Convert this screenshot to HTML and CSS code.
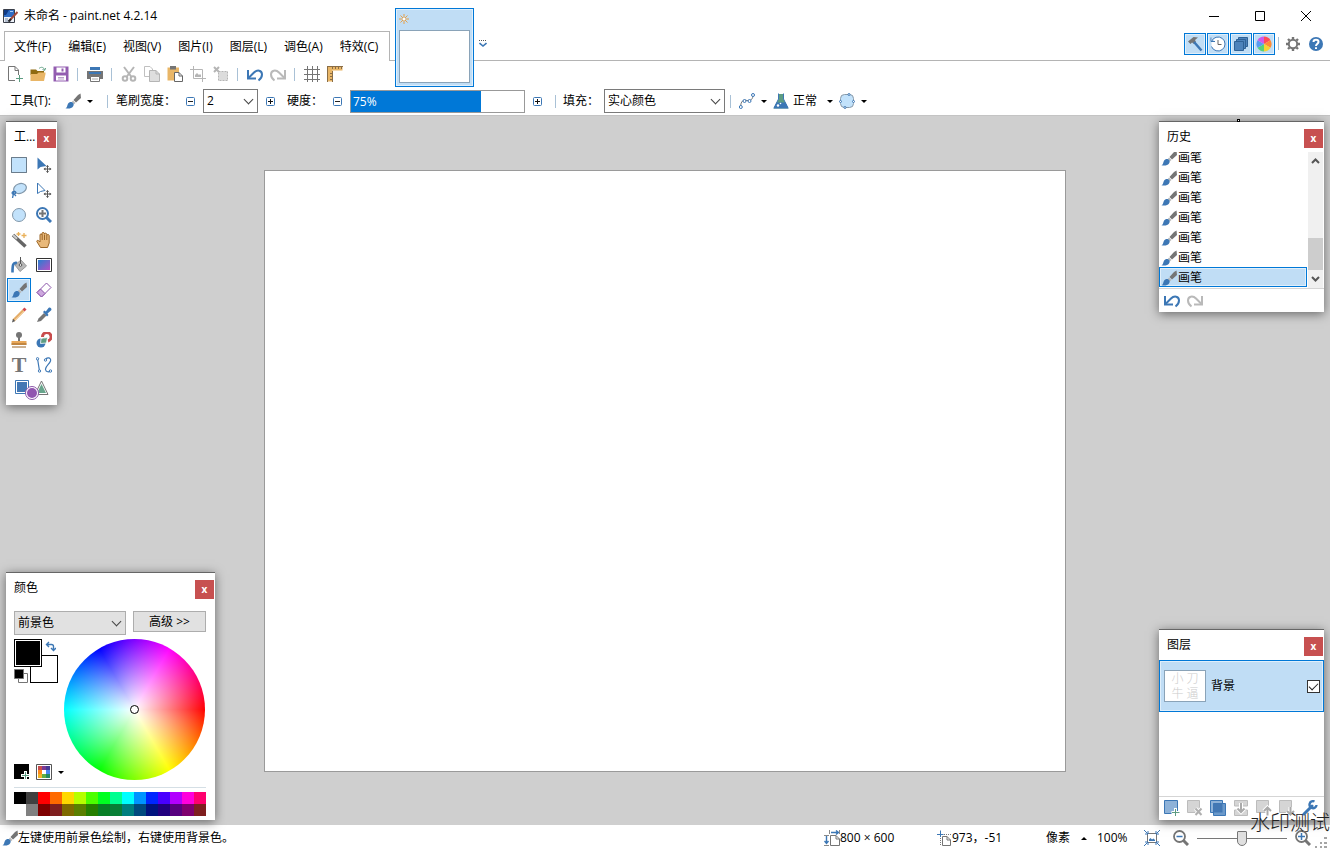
FILE: index.html
```html
<!DOCTYPE html>
<html lang="zh-CN">
<head>
    <meta charset="UTF-8">
    <meta name="viewport" content="width=device-width, initial-scale=1.0">
    <title>未命名 - paint.net 4.2.14</title>
    <link rel="stylesheet" href="styles.css">
</head>
<body>
    <!-- Icon sprite -->
    <svg class="sprite" aria-hidden="true">
        <symbol id="i-brush" viewBox="0 0 16 16">
            <path d="M15.5 0.5L16 5L11 9.5L8.5 7L13 2Z" fill="#757575"/>
            <path d="M8 7.5L10.5 10L9 11.2L6.8 9Z" fill="#b9b9b9"/>
            <path d="M6.5 9C8.500 9.500 9.500 11.500 8 13.500C6.500 15.800 3 15.800 0.500 15.200C2.500 14.500 2 12.500 3 10.800C3.800 9.500 5 8.800 6.500 9Z" fill="#3c77b5"/>
        </symbol>
        <symbol id="i-undo" viewBox="0 0 18 16">
            <path d="M2 4V12.500H10" fill="none" stroke="#3c77b5" stroke-width="2"/>
            <path d="M2.500 12L8 6.500C11 3.500 16 4 16 8.500C16 11 14.500 13 12.500 14.500" fill="none" stroke="#3c77b5" stroke-width="2"/>
        </symbol>
        <symbol id="i-redo" viewBox="0 0 18 16">
            <path d="M16 4V12.500H8" fill="none" stroke="#b9b9b9" stroke-width="2"/>
            <path d="M15.500 12L10 6.500C7 3.500 2 4 2 8.500C2 11 3.500 13 5.500 14.500" fill="none" stroke="#b9b9b9" stroke-width="2"/>
        </symbol>
        <symbol id="i-app" viewBox="0 0 16 16">
            <path d="M1.500 1.500H12.500V14.500H1.500Z" fill="#eef3fa" stroke="#3a3f4a"/>
            <path d="M2 2H12V9H2Z" fill="#2f6cc4"/>
            <path d="M2 2H7L4 7H2Z" fill="#0f3a86"/>
            <path d="M8 3.500H11" stroke="#a9cdf5"/>
            <path d="M3 11H6M3 13H9" stroke="#7a8aa5"/>
            <path d="M15.500 4L8 12" stroke="#a34a3c" stroke-width="2"/>
            <path d="M9 11L6.500 13.500" stroke="#222" stroke-width="2"/>
        </symbol>
        <symbol id="i-new" viewBox="0 0 16 16">
            <path d="M8 14.500H1.500V0.500H8L11.500 4V9M8 0.500V4.500H11.500" fill="none" stroke="#757575"/>
            <path d="M12.500 9V16M9 12.500H16" stroke="#5d9c82"/>
        </symbol>
        <symbol id="i-open" viewBox="0 0 16 16">
            <path d="M0.500 3.500H6L7.500 5H14V9H0.500Z" fill="#8f6a12"/>
            <path d="M0.500 15V8H7L8.500 6.500H15.500V8L14 15Z" fill="#e9b667"/>
            <path d="M9 2.500C11 0.500 14 1 14.500 4M12.500 3.500L14.700 4.500L15.700 2" fill="none" stroke="#6aa58b"/>
        </symbol>
        <symbol id="i-save" viewBox="0 0 16 16">
            <path d="M0.500 0.500H15.500V15.500H0.500Z" fill="#935db0"/>
            <path d="M3.500 1.500H12.500V6.500H3.500ZM3 9.500H13V14.500H3Z" fill="#fff"/>
            <path d="M8.500 2.500H10.500V5.500H8.500Z" fill="#935db0"/>
            <path d="M5 11.500H11M5 13H11" stroke="#b9a0c9"/>
        </symbol>
        <symbol id="i-print" viewBox="0 0 16 16">
            <path d="M3 1H13V4H3Z" fill="#3c77b5"/>
            <path d="M0 5H16V13H0Z" fill="#757575"/>
            <path d="M2 6H14V8H2Z" fill="#3c77b5"/>
            <path d="M3.500 10.500H12.500V15.500H3.500Z" fill="#fff" stroke="#757575"/>
            <path d="M5 13H11" stroke="#aaa"/>
        </symbol>
        <symbol id="i-cut" viewBox="0 0 16 16">
            <g fill="none" stroke="#b5b5b5" stroke-width="2">
                <path d="M3 1L10.500 11M13 1L5.500 11"/>
                <circle cx="4" cy="12.500" r="2.300"/>
                <circle cx="12" cy="12.500" r="2.300"/>
            </g>
        </symbol>
        <symbol id="i-copy" viewBox="0 0 16 16">
            <path d="M0.500 0.500H6L8.500 3V10.500H0.500Z" fill="#fff" stroke="#c0c0c0"/>
            <path d="M5.500 4.500H12L15.500 8V15.500H5.500Z" fill="#dedede" stroke="#b5b5b5"/>
            <path d="M12 4.500V8H15.500" fill="none" stroke="#b5b5b5"/>
        </symbol>
        <symbol id="i-paste" viewBox="0 0 16 16">
            <path d="M0.500 1.500H12V14.500H0.500Z" fill="#e9b667"/>
            <path d="M3 0H9V3.500H3Z" fill="#757575"/>
            <path d="M7.500 6.500H12L15.500 10V15.500H7.500Z" fill="#fff" stroke="#666"/>
            <path d="M12 6.500V10H15.500" fill="none" stroke="#666"/>
        </symbol>
        <symbol id="i-crop" viewBox="0 0 16 16">
            <path d="M3.500 0V12.500H16M0 3.500H12.500V16" fill="none" stroke="#b5b5b5"/>
            <path d="M5 11V9L7 7L9 9L10 8L11 9V11Z" fill="#b5b5b5"/>
        </symbol>
        <symbol id="i-deselect" viewBox="0 0 16 16">
            <path d="M5.500 5.500H14.500V14.500H5.500Z" fill="#dcdcdc" stroke="#b5b5b5" stroke-dasharray="2 1"/>
            <path d="M1 1L6 6M6 1L1 6" stroke="#b5b5b5" stroke-width="2"/>
        </symbol>
        <symbol id="i-grid" viewBox="0 0 16 16">
            <path d="M3.500 0V16M8.500 0V16M13.500 0V16M0 3.500H16M0 8.500H16M0 13.500H16" stroke="#757575"/>
        </symbol>
        <symbol id="i-ruler" viewBox="0 0 16 16">
            <path d="M0.500 0.500H15.500V4.500H5.500V15.500H0.500Z" fill="#e9b667"/>
            <path d="M5.500 16V5M0 0.500H16M5.500 1V3M8.500 1V3M11.500 1V3M14.500 1V3M0.500 0V16M3 7.500H5M3 10.500H5M3 13.500H5" fill="none" stroke="#8a6d45"/>
        </symbol>
        <symbol id="i-minus" viewBox="0 0 11 11">
            <rect x="1.500" y="1.500" width="8" height="8" rx="1" fill="#fff" stroke="#3c77b5"/>
            <path d="M3 5.500H8" stroke="#222"/>
        </symbol>
        <symbol id="i-plus" viewBox="0 0 11 11">
            <rect x="1.500" y="1.500" width="8" height="8" rx="1" fill="#fff" stroke="#3c77b5"/>
            <path d="M3 5.500H8M5.500 3V8" stroke="#111"/>
        </symbol>
        <symbol id="i-curve" viewBox="0 0 16 16">
            <path d="M1.500 14C2 8 4 6.500 8 7.500C11.500 8.500 14 6 14 2" fill="none" stroke="#757575"/>
            <g fill="#fff" stroke="#3c77b5">
                <circle cx="1.800" cy="14" r="1.500"/><circle cx="5.500" cy="8" r="1.500"/>
                <circle cx="10.500" cy="8" r="1.500"/><circle cx="14" cy="2" r="1.500"/>
            </g>
        </symbol>
        <symbol id="i-flask" viewBox="0 0 16 16">
            <path d="M5.500 1H10.500V6L15.500 15.500H0.500L5.500 6Z" fill="#5d9c82"/>
            <path d="M3.500 9.500H12.500L15.500 15.500H0.500Z" fill="#3c77b5"/>
            <path d="M5.500 0.500V6L1 15M10.500 0.500V6L15 15" fill="none" stroke="#3c77b5"/>
            <circle cx="5" cy="12.500" r="1.200" fill="#fff"/><circle cx="7.500" cy="10.500" r="0.800" fill="#fff"/>
        </symbol>
        <symbol id="i-shape" viewBox="0 0 16 16">
            <rect x="1.500" y="1.500" width="13" height="13" rx="4" fill="#c2e2fb" stroke="#8a9aa8"/>
            <g fill="#fff" stroke="#3c77b5"><circle cx="10" cy="1.500" r="1"/><circle cx="1.500" cy="8.500" r="1"/><circle cx="14.500" cy="8.500" r="1"/><circle cx="6" cy="14.500" r="1"/></g>
        </symbol>
        <symbol id="i-hammer" viewBox="0 0 16 16">
            <path d="M1 5.500L6.500 1L11 1.500L8 4L9 6L7 8L5 6.500L3.500 8Z" fill="#757575"/>
            <path d="M7 6L14.500 14.500" stroke="#3c77b5" stroke-width="2.500"/>
        </symbol>
        <symbol id="i-clock" viewBox="0 0 16 16">
            <path d="M1.500 5.500A7 7 0 1 1 1.500 10.500M1 1.500V5.500H5" fill="#fff" stroke="#3c77b5"/>
            <path d="M8 4V8.500H11.500" fill="none" stroke="#666"/>
        </symbol>
        <symbol id="i-stack" viewBox="0 0 16 16">
            <g fill="#4d83bb" stroke="#2f6296"><path d="M5.500 1.500H14.500V10.500H5.500Z"/><path d="M3.500 3.500H12.500V12.500H3.500Z"/><path d="M1.500 5.500H10.500V14.500H1.500Z"/></g>
        </symbol>
        <symbol id="i-wheel" viewBox="0 0 16 16">
            <path d="M8 8V0.500A7.500 7.500 0 0 1 14.500 4.200Z" fill="#ff4c55"/>
            <path d="M8 8L14.500 4.200A7.500 7.500 0 0 1 14.500 11.800Z" fill="#ff8b35"/>
            <path d="M8 8L14.500 11.800A7.500 7.500 0 0 1 8 15.500Z" fill="#f6d433"/>
            <path d="M8 8V15.500A7.500 7.500 0 0 1 1.500 11.800Z" fill="#56d17a"/>
            <path d="M8 8L1.500 11.800A7.500 7.500 0 0 1 1.500 4.200Z" fill="#5a9cf2"/>
            <path d="M8 8L1.500 4.200A7.500 7.500 0 0 1 8 0.500Z" fill="#cf5bea"/>
        </symbol>
        <symbol id="i-gear" viewBox="0 0 16 16">
            <circle cx="8" cy="8" r="4.200" fill="none" stroke="#757575" stroke-width="2"/>
            <path d="M8 1V3M8 13V15M1 8H3M13 8H15M3 3L4.500 4.500M11.500 11.500L13 13M3 13L4.500 11.500M11.500 4.500L13 3" stroke="#757575" stroke-width="2.400"/>
        </symbol>
        <symbol id="i-help" viewBox="0 0 16 16">
            <circle cx="8" cy="8" r="7" fill="#3c77b5"/>
            <path d="M5.500 6C5.500 3 10.500 3 10.500 6C10.500 7.500 8 8 8 10M8 11.200V13" fill="none" stroke="#fff" stroke-width="2"/>
        </symbol>
        <symbol id="t-rect" viewBox="0 0 16 16"><path d="M0.500 0.500H15.500V15.500H0.500Z" fill="#c2e2fb" stroke="#8fb4d4"/><path d="M0.500 0.500H15.500V15.500H0.500Z" fill="none" stroke="#444" stroke-dasharray="1 1"/></symbol>
        <symbol id="t-move" viewBox="0 0 16 16"><path d="M1.500 0.500V12.500L4.500 10L10.500 9Z" fill="#3c77b5"/><path d="M11.500 8.500V15.500M8 12H15" stroke="#555"/><path d="M10 10L11.500 8L13 10ZM10 14L11.500 16L13 14ZM9.500 10.500L7.500 12L9.500 13.500ZM13.500 10.500L15.500 12L13.500 13.500Z" fill="#555"/></symbol>
        <symbol id="t-movesel" viewBox="0 0 16 16"><path d="M1.500 1V11.500L4.500 9.500L9 8.500Z" fill="#fff" stroke="#3c77b5"/><path d="M11.500 8.500V15.500M8 12H15" stroke="#555"/><path d="M10 10L11.500 8L13 10ZM10 14L11.500 16L13 14ZM9.500 10.500L7.500 12L9.500 13.500ZM13.500 10.500L15.500 12L13.500 13.500Z" fill="#555"/></symbol>
        <symbol id="t-lasso" viewBox="0 0 16 16"><ellipse cx="9" cy="6.500" rx="6.500" ry="4.800" transform="rotate(-20 9 6.500)" fill="#c2e2fb" stroke="#8298ab" stroke-width="1.200"/><path d="M3 9.500C0 10 1 13 3.500 12C5.500 11 5 9 3 9.500L1.500 16M3 12L5 14" fill="none" stroke="#3c77b5" stroke-width="1.300"/></symbol>
        <symbol id="t-ellipse" viewBox="0 0 16 16"><circle cx="8" cy="8" r="6.500" fill="#c2e2fb" stroke="#8298ab"/></symbol>
        <symbol id="t-zoom" viewBox="0 0 16 16"><circle cx="6.500" cy="6.500" r="5.500" fill="#fff" stroke="#3c77b5" stroke-width="2"/><path d="M10.500 10.500L15 15" stroke="#3c77b5" stroke-width="3"/><path d="M6.500 3V10M3 6.500H10" stroke="#757575" stroke-width="2"/></symbol>
        <symbol id="t-wand" viewBox="0 0 16 16"><path d="M2 3L14.500 14.500" stroke="#666" stroke-width="3.500"/><path d="M2 3L6 6.700" stroke="#ccc" stroke-width="2"/><path d="M7.500 0V4M5.500 2H9.500M13 1V6M10.500 3.500H15.500" stroke="#e9b15a" stroke-width="1.300"/></symbol>
        <symbol id="t-hand" viewBox="0 0 16 16"><path d="M4.500 15.500L0.800 9.500C0.500 8 2.500 8 4 10V3C4 1.500 6 1.500 6 3V1.500C6 0 8.300 0 8.300 1.500V2C8.300 0.800 10.800 0.800 10.800 2.500V3.500C11 2 13.200 2 13.200 4V11L11.500 15.500Z" fill="#e9b97a" stroke="#9a6526"/><path d="M6.200 3V8M8.500 2.500V8M10.800 3.500V8" stroke="#9a6526"/></symbol>
        <symbol id="t-bucket" viewBox="0 0 16 16"><path d="M4 8L10 3L15.500 9L9 14.500Z" fill="#b8b8b8" stroke="#999"/><path d="M9.500 0V8" stroke="#555"/><circle cx="9.500" cy="8" r="1.300" fill="#fff" stroke="#555"/><path d="M6 6C2 5 1.500 8 1.500 15.500" fill="none" stroke="#3c77b5" stroke-width="2.600"/></symbol>
        <linearGradient id="grad" x1="0" y1="0" x2="1" y2="1"><stop offset="0" stop-color="#277fd1"/><stop offset="1" stop-color="#b74fc6"/></linearGradient>
        <symbol id="t-gradient" viewBox="0 0 16 16"><path d="M0.500 1.500H15.500V14.500H0.500Z" fill="#fff" stroke="#333"/><path d="M2 3H14V13H2Z" fill="url(#grad)"/></symbol>
        <symbol id="t-eraser" viewBox="0 0 16 16"><path d="M10.500 1L15 5.500L5.500 15L1 10.500Z" fill="#fff" stroke="#8c55aa"/><path d="M4.500 7L9 11.500L5.500 15L1 10.500Z" fill="#cda8de" stroke="#8c55aa"/></symbol>
        <symbol id="t-pencil" viewBox="0 0 16 16"><path d="M2.500 13.500L12.500 3.500" stroke="#e5ad68" stroke-width="3"/><path d="M3 14L13 4" stroke="#f3cc98" stroke-width="1"/><path d="M12.500 3.500L14.500 1.500" stroke="#d3474b" stroke-width="3"/><path d="M1 15.500L2 11.800L4.200 14Z" fill="#555"/></symbol>
        <symbol id="t-picker" viewBox="0 0 16 16"><path d="M1 15L2.500 11.500L8 6L10.500 8.500L5 14Z" fill="#757575"/><path d="M7 5L8.500 3.500L9.800 4.500L12.500 1C14 -0.500 16.500 2 15 3.500L11.500 6.500L12.500 8L11 9.500Z" fill="#3c77b5"/></symbol>
        <symbol id="t-stamp" viewBox="0 0 16 16"><circle cx="8" cy="3" r="3" fill="#757575"/><path d="M7 5H9V9H7Z" fill="#757575"/><path d="M0.500 9H15.500V13H0.500Z" fill="#e9a85a"/><path d="M0.500 12H15.500M1 15H15" stroke="#9a6526"/></symbol>
        <symbol id="t-recolor" viewBox="0 0 16 16"><path d="M6.500 5A4.300 4.300 0 1 1 12 9" fill="none" stroke="#c84c4c" stroke-width="3"/><circle cx="5" cy="11" r="4.500" fill="#3c77b5"/><path d="M4.500 11.500L5 6.500L11.500 5L10.500 11Z" fill="#5d9c82" stroke="#fff" stroke-width="0.800"/><path d="M9 6.500L12 3.500" stroke="#fff"/></symbol>
        <symbol id="t-line" viewBox="0 0 16 16"><path d="M1.500 1.500L3.500 14M9.500 3C10 0 15.500 0 14.500 4C13.500 7 9 9.500 9.500 12.500C10 15.500 13 15 15 14" fill="none" stroke="#3c77b5" stroke-width="1.200"/><g fill="#fff" stroke="#3c77b5"><circle cx="1.500" cy="1.800" r="1.200"/><circle cx="3.500" cy="14" r="1.200"/><circle cx="9.500" cy="3" r="1.200"/><circle cx="14.500" cy="14" r="1.200"/></g></symbol>
        <symbol id="t-shapes" viewBox="0 0 36 20"><path d="M1.500 0.500H14.500V13.500H1.500Z" fill="#fff" stroke="#3c77b5"/><path d="M3 2H13V12H3Z" fill="#4378b4"/><path d="M27.500 1L34 14.500H21Z" fill="#fff" stroke="#757575"/><path d="M27.500 4L32 13H23Z" fill="#68a58c"/><circle cx="18" cy="13" r="6.500" fill="#fff" stroke="#8c55aa"/><circle cx="18" cy="13" r="5" fill="#9155b0"/></symbol>
        <symbol id="l-add" viewBox="0 0 16 16"><path d="M0.500 0.500H13.500V13.500H0.500Z" fill="#8eb2d8" stroke="#3c77b5"/><path d="M11.500 8V16M7.500 12.500H16" stroke="#fff" stroke-width="3"/><path d="M11.500 9V16M8 12.500H15.500" stroke="#5d9c82"/></symbol>
        <symbol id="l-del" viewBox="0 0 16 16"><path d="M0.500 0.500H12.500V12.500H0.500Z" fill="#d5d5d5" stroke="#bcbcbc"/><path d="M8.500 8.500L14.500 15M14.500 8.500L8.500 15" stroke="#fff" stroke-width="4"/><path d="M8.500 8.500L14.500 15M14.500 8.500L8.500 15" stroke="#b0b0b0" stroke-width="2"/></symbol>
        <symbol id="l-dup" viewBox="0 0 16 16"><path d="M0.500 0.500H12.500V12.500H0.500Z" fill="#8eb2d8" stroke="#3c77b5"/><path d="M3.500 3.500H15.500V15.500H3.500Z" fill="#6b99ca" stroke="#3c77b5"/><path d="M3.500 3.500H12.500V12.500H3.500Z" fill="#4378b4"/></symbol>
        <symbol id="l-merge" viewBox="0 0 16 16"><path d="M1.500 0.500H14.500V6H1.500ZM1.500 10H14.500V15.500H1.500Z" fill="#d5d5d5" stroke="#bcbcbc"/><path d="M8 3V12M4.500 8.500L8 12L11.500 8.500" fill="none" stroke="#fff" stroke-width="4"/><path d="M8 3V12M4.500 8.500L8 12L11.500 8.500" fill="none" stroke="#aaa" stroke-width="2"/></symbol>
        <symbol id="l-up" viewBox="0 0 16 16"><path d="M0.500 0.500H12.500V12.500H0.500Z" fill="#d5d5d5" stroke="#bcbcbc"/><path d="M11.500 15.500V8M8 11L11.500 7.500L15 11" fill="none" stroke="#fff" stroke-width="4"/><path d="M11.500 15.500V8M8 11L11.500 7.500L15 11" fill="none" stroke="#aaa" stroke-width="2"/></symbol>
        <symbol id="l-down" viewBox="0 0 16 16"><path d="M0.500 0.500H12.500V12.500H0.500Z" fill="#d5d5d5" stroke="#bcbcbc"/><path d="M11.500 7V14.500M8 11L11.500 14.500L15 11" fill="none" stroke="#fff" stroke-width="4"/><path d="M11.500 7V14.500M8 11L11.500 14.500L15 11" fill="none" stroke="#aaa" stroke-width="2"/></symbol>
        <symbol id="l-wrench" viewBox="0 0 16 16"><path d="M2 14L10 6" stroke="#3c77b5" stroke-width="3" stroke-linecap="round"/><path d="M12.500 1.500A3.500 3.500 0 1 0 14.500 5" fill="none" stroke="#3c77b5" stroke-width="2.400"/></symbol>
        <symbol id="s-size" viewBox="0 0 16 16"><path d="M6.500 5.500H12L15.500 9V15.500H6.500ZM12 5.500V9H15.500" fill="#fff" stroke="#757575"/><path d="M2.500 6V13M0.500 11L2.500 13.500L4.500 11M7 2.500H14M12 0.500L14.500 2.500L12 4.500" fill="none" stroke="#3c77b5" stroke-width="1.400"/><path d="M0 5.500H5M0 15.500H5M5.500 0V4M15.500 0V4" stroke="#888"/></symbol>
        <symbol id="s-pos" viewBox="0 0 16 16"><path d="M6.500 6.500H11L14.500 10V15.500H6.500ZM11 6.500V10H14.500" fill="#fff" stroke="#757575"/><path d="M4.500 0.500V7M1 4.500H7.500" stroke="#3c77b5"/><path d="M8 4.500H16M4.500 8V16" stroke="#777" stroke-dasharray="1 1"/></symbol>
        <symbol id="s-fit" viewBox="0 0 16 16"><path d="M3.500 3.500H12.500V12.500H3.500Z" fill="#fff" stroke="#757575"/><path d="M5 11V9.500L6.500 8L8 9.500L9.500 8.500L11 10V11Z" fill="#3c77b5"/><path d="M0 0L4 4M4 1V4H1M16 0L12 4M12 1V4H15M0 16L4 12M1 12H4V15M16 16L12 12M15 12H12V15" fill="none" stroke="#3c77b5"/></symbol>
        <symbol id="s-zoomout" viewBox="0 0 16 16"><circle cx="6.500" cy="6.500" r="5.500" fill="#fff" stroke="#757575" stroke-width="1.800"/><path d="M10.500 10.500L15 15" stroke="#757575" stroke-width="3"/><path d="M3.500 6.500H9.500" stroke="#3c77b5" stroke-width="1.500"/></symbol>
        <symbol id="s-zoomin" viewBox="0 0 16 16"><circle cx="6.500" cy="6.500" r="5.500" fill="#fff" stroke="#757575" stroke-width="1.800"/><path d="M10.500 10.500L15 15" stroke="#757575" stroke-width="3"/><path d="M3 6.500H10M6.500 3V10" stroke="#3c77b5" stroke-width="1.500"/></symbol>
    </svg>

    <header class="app-header">
        <div class="titlebar">
            <svg class="icon"><use href="#i-app"/></svg>
            <h1 class="title">未命名 - paint.net 4.2.14</h1>
            <div class="window-buttons">
                <button aria-label="最小化"><svg viewBox="0 0 10 10"><path d="M0 5.500H10"/></svg></button>
                <button aria-label="最大化"><svg viewBox="0 0 10 10"><path d="M0.500 0.500H9.500V9.500H0.500Z"/></svg></button>
                <button aria-label="关闭"><svg viewBox="0 0 10 10"><path d="M0 0L10 10M10 0L0 10"/></svg></button>
            </div>
        </div>

        <div class="menu-row">
            <nav class="menu">
                <button>文件(F)</button>
                <button>编辑(E)</button>
                <button>视图(V)</button>
                <button>图片(I)</button>
                <button>图层(L)</button>
                <button>调色(A)</button>
                <button>特效(C)</button>
            </nav>
            <div class="menu-rest">
                <button class="tab-list" aria-label="图像列表">
                    <svg viewBox="0 0 8 8"><path d="M0 0.500H8" stroke="#555" stroke-dasharray="1 1"/><path d="M0.500 3L4 6L7.500 3" fill="none" stroke="#3c77b5" stroke-width="1.600"/></svg>
                </button>
                <div class="toggles">
                    <button class="toggle" aria-label="工具"><svg class="icon"><use href="#i-hammer"/></svg></button>
                    <button class="toggle" aria-label="历史"><svg class="icon"><use href="#i-clock"/></svg></button>
                    <button class="toggle" aria-label="图层"><svg class="icon"><use href="#i-stack"/></svg></button>
                    <button class="toggle" aria-label="颜色"><svg class="icon"><use href="#i-wheel"/></svg></button>
                    <span class="sep"></span>
                    <button class="tool-btn" aria-label="设置"><svg class="icon"><use href="#i-gear"/></svg></button>
                    <button class="tool-btn" aria-label="帮助"><svg class="icon"><use href="#i-help"/></svg></button>
                </div>
            </div>
        </div>

        <!-- Thumbnail of the open image, hangs over the menu and the toolbar -->
        <button class="image-tab" aria-label="未命名">
            <svg viewBox="0 0 10 10"><path d="M5 0V10M0 5H10M1.500 1.500L8.500 8.500M8.500 1.500L1.500 8.500" stroke="#e6a14a"/><circle cx="5" cy="5" r="1.300" fill="#fff"/></svg>
            <span class="image-tab-thumb"></span>
        </button>

        <div class="toolbar">
            <button class="tool-btn" aria-label="新建"><svg class="icon"><use href="#i-new"/></svg></button>
            <button class="tool-btn" aria-label="打开"><svg class="icon"><use href="#i-open"/></svg></button>
            <button class="tool-btn" aria-label="保存"><svg class="icon"><use href="#i-save"/></svg></button>
            <span class="sep"></span>
            <button class="tool-btn" aria-label="打印"><svg class="icon"><use href="#i-print"/></svg></button>
            <span class="sep"></span>
            <button class="tool-btn" aria-label="剪切"><svg class="icon"><use href="#i-cut"/></svg></button>
            <button class="tool-btn" aria-label="复制"><svg class="icon"><use href="#i-copy"/></svg></button>
            <button class="tool-btn" aria-label="粘贴"><svg class="icon"><use href="#i-paste"/></svg></button>
            <button class="tool-btn" aria-label="裁剪"><svg class="icon"><use href="#i-crop"/></svg></button>
            <button class="tool-btn" aria-label="取消选择"><svg class="icon"><use href="#i-deselect"/></svg></button>
            <span class="sep"></span>
            <button class="tool-btn" aria-label="撤消"><svg class="icon icon-wide"><use href="#i-undo"/></svg></button>
            <button class="tool-btn" aria-label="重做"><svg class="icon icon-wide"><use href="#i-redo"/></svg></button>
            <span class="sep"></span>
            <button class="tool-btn" aria-label="网格"><svg class="icon"><use href="#i-grid"/></svg></button>
            <button class="tool-btn" aria-label="标尺"><svg class="icon"><use href="#i-ruler"/></svg></button>
        </div>

        <div class="toolbar options">
            <span class="options-label tool-label">工具(T):</span>
            <button class="drop-btn" aria-label="画笔"><svg class="icon"><use href="#i-brush"/></svg><i class="caret"></i></button>
            <span class="sep sep-wide"></span>
            <label class="options-label width-label" for="brushWidth">笔刷宽度：</label>
            <button class="step" aria-label="减小宽度"><svg><use href="#i-minus"/></svg></button>
            <span class="select brush-width"><select id="brushWidth"><option>2</option></select></span>
            <button class="step" aria-label="增大宽度"><svg><use href="#i-plus"/></svg></button>
            <label class="options-label hardness-label" for="hardness">硬度：</label>
            <button class="step" aria-label="减小硬度"><svg><use href="#i-minus"/></svg></button>
            <span class="hardness">
                <input type="range" id="hardness" min="0" max="100" value="75" style="--value: 75%">
                <output for="hardness">75%</output>
            </span>
            <button class="step" aria-label="增大硬度"><svg><use href="#i-plus"/></svg></button>
            <span class="sep"></span>
            <label class="options-label fill-label" for="fill">填充：</label>
            <span class="select fill"><select id="fill"><option>实心颜色</option></select></span>
            <span class="sep sep-last"></span>
            <button class="drop-btn" aria-label="曲线"><svg class="icon"><use href="#i-curve"/></svg><i class="caret"></i></button>
            <button class="drop-btn blend"><svg class="icon"><use href="#i-flask"/></svg><span>正常</span><i class="caret"></i></button>
            <button class="drop-btn" aria-label="选区模式"><svg class="icon"><use href="#i-shape"/></svg><i class="caret"></i></button>
        </div>
    </header>

    <main class="workspace">
        <div class="canvas"></div>

        <section class="panel tools-panel">
            <div class="panel-head"><h2>工具</h2><button class="close" aria-label="关闭">x</button></div>
            <div class="tools">
                <button aria-label="矩形选择"><svg class="icon"><use href="#t-rect"/></svg></button>
                <button aria-label="移动所选像素"><svg class="icon"><use href="#t-move"/></svg></button>
                <button aria-label="套索选择"><svg class="icon"><use href="#t-lasso"/></svg></button>
                <button aria-label="移动选区"><svg class="icon"><use href="#t-movesel"/></svg></button>
                <button aria-label="椭圆选择"><svg class="icon"><use href="#t-ellipse"/></svg></button>
                <button aria-label="缩放"><svg class="icon"><use href="#t-zoom"/></svg></button>
                <button aria-label="魔术棒"><svg class="icon"><use href="#t-wand"/></svg></button>
                <button aria-label="平移"><svg class="icon"><use href="#t-hand"/></svg></button>
                <button aria-label="油漆桶"><svg class="icon"><use href="#t-bucket"/></svg></button>
                <button aria-label="渐变"><svg class="icon"><use href="#t-gradient"/></svg></button>
                <button class="active" aria-label="画笔"><svg class="icon"><use href="#i-brush"/></svg></button>
                <button aria-label="橡皮擦"><svg class="icon"><use href="#t-eraser"/></svg></button>
                <button aria-label="铅笔"><svg class="icon"><use href="#t-pencil"/></svg></button>
                <button aria-label="取色器"><svg class="icon"><use href="#t-picker"/></svg></button>
                <button aria-label="克隆图章"><svg class="icon"><use href="#t-stamp"/></svg></button>
                <button aria-label="重新着色"><svg class="icon"><use href="#t-recolor"/></svg></button>
                <button class="text-tool">T</button>
                <button aria-label="线条"><svg class="icon"><use href="#t-line"/></svg></button>
                <button class="shapes" aria-label="形状"><svg><use href="#t-shapes"/></svg></button>
            </div>
        </section>

        <section class="panel history-panel">
            <div class="panel-head"><h2>历史</h2><button class="close" aria-label="关闭">x</button></div>
            <div class="history-body">
                <ul class="history-list">
                    <li><svg class="icon"><use href="#i-brush"/></svg>画笔</li>
                    <li><svg class="icon"><use href="#i-brush"/></svg>画笔</li>
                    <li><svg class="icon"><use href="#i-brush"/></svg>画笔</li>
                    <li><svg class="icon"><use href="#i-brush"/></svg>画笔</li>
                    <li><svg class="icon"><use href="#i-brush"/></svg>画笔</li>
                    <li><svg class="icon"><use href="#i-brush"/></svg>画笔</li>
                    <li class="selected"><svg class="icon"><use href="#i-brush"/></svg>画笔</li>
                </ul>
                <div class="scrollbar">
                    <svg viewBox="0 0 9 6"><path d="M1 5L4.500 1.500L8 5"/></svg>
                    <span class="scroll-thumb"></span>
                    <svg viewBox="0 0 9 6"><path d="M1 1L4.500 4.500L8 1"/></svg>
                </div>
            </div>
            <div class="panel-foot history-foot">
                <button aria-label="撤消"><svg class="icon icon-wide"><use href="#i-undo"/></svg></button>
                <button aria-label="重做"><svg class="icon icon-wide"><use href="#i-redo"/></svg></button>
            </div>
            <span class="pointer"></span>
        </section>

        <section class="panel colors-panel">
            <div class="panel-head"><h2>颜色</h2><button class="close" aria-label="关闭">x</button></div>
            <div class="colors-body">
                <div class="colors-top">
                    <span class="select grey"><select aria-label="颜色目标"><option>前景色</option></select></span>
                    <button class="more">高级 &gt;&gt;</button>
                </div>
                <div class="colors-main">
                    <div class="colors-side">
                        <div class="swatches">
                            <span class="swatch back"></span>
                            <span class="swatch front"></span>
                            <svg class="swap" viewBox="0 0 11 11"><path d="M1.500 3.500H6.500Q8.500 3.500 8.500 5.500V9M4 1L1.500 3.500L4 6M6 7L8.500 9.500L11 7" fill="none" stroke="#3c77b5" stroke-width="1.400"/></svg>
                            <svg class="reset" viewBox="0 0 14 14"><path d="M4.500 4.500H13.500V13.500H4.500Z" fill="#fff" stroke="#757575"/><path d="M0.500 0.500H9.500V9.500H0.500Z" stroke="#757575"/></svg>
                        </div>
                        <div class="palette-tools">
                            <button aria-label="添加颜色"><svg class="icon" viewBox="0 0 16 16"><path d="M0 0H15V15H0Z"/><path d="M11.500 7V16M7 11.500H16" stroke="#fff" stroke-width="3"/><path d="M11.500 8V15M8 11.500H15" stroke="#5d9c82"/></svg></button>
                            <button class="drop-btn" aria-label="调色板"><svg class="icon" viewBox="0 0 16 16"><path d="M0.500 0.500H15.500V15.500H0.500Z" fill="#fff" stroke="#555"/><path d="M2 2H6V6H2Z" fill="#c84c4c"/><path d="M6 2H10V6H6Z" fill="#7a3a95"/><path d="M10 2H14V6H10Z" fill="#443a95"/><path d="M2 6H6V10H2Z" fill="#ff8a1c"/><path d="M10 6H14V10H10Z" fill="#4a86f0"/><path d="M2 10H6V14H2Z" fill="#f0b428"/><path d="M6 10H10V14H6Z" fill="#5fae45"/><path d="M10 10H14V14H10Z" fill="#238a62"/></svg><i class="caret"></i></button>
                        </div>
                    </div>
                    <div class="wheel"><span class="wheel-mark"></span></div>
                </div>
                <div class="palette">
                    <i style="background:#000000"></i><i style="background:#404040"></i><i style="background:#ff0000"></i><i style="background:#ff6a00"></i><i style="background:#ffd800"></i><i style="background:#b6ff00"></i><i style="background:#4cff00"></i><i style="background:#00ff21"></i><i style="background:#00ff90"></i><i style="background:#00ffff"></i><i style="background:#0094ff"></i><i style="background:#0026ff"></i><i style="background:#4800ff"></i><i style="background:#b200ff"></i><i style="background:#ff00dc"></i><i style="background:#ff006e"></i>
                    <i style="background:#ffffff"></i><i style="background:#808080"></i><i style="background:#7f0000"></i><i style="background:#7f1f1f"></i><i style="background:#7f6a00"></i><i style="background:#5b7f00"></i><i style="background:#267f00"></i><i style="background:#087f26"></i><i style="background:#087f36"></i><i style="background:#007f7f"></i><i style="background:#004a7f"></i><i style="background:#00137f"></i><i style="background:#21007f"></i><i style="background:#57007f"></i><i style="background:#7f006e"></i><i style="background:#7f1f1f"></i>
                </div>
            </div>
        </section>

        <section class="panel layers-panel">
            <div class="panel-head"><h2>图层</h2><button class="close" aria-label="关闭">x</button></div>
            <label class="layer">
                <span class="layer-thumb">小 刀<br>牛 逼</span>
                <span class="layer-name">背景</span>
                <input type="checkbox" checked>
            </label>
            <div class="layers-space"></div>
            <div class="panel-foot layers-foot">
                <button aria-label="添加图层"><svg class="icon"><use href="#l-add"/></svg></button>
                <button aria-label="删除图层"><svg class="icon"><use href="#l-del"/></svg></button>
                <button aria-label="复制图层"><svg class="icon"><use href="#l-dup"/></svg></button>
                <button aria-label="向下合并"><svg class="icon"><use href="#l-merge"/></svg></button>
                <button aria-label="上移"><svg class="icon"><use href="#l-up"/></svg></button>
                <button aria-label="下移"><svg class="icon"><use href="#l-down"/></svg></button>
                <button aria-label="属性"><svg class="icon"><use href="#l-wrench"/></svg></button>
            </div>
        </section>
    </main>

    <footer class="statusbar">
        <svg class="icon"><use href="#i-brush"/></svg>
        <span class="hint">左键使用前景色绘制，右键使用背景色。</span>
        <span class="status-item status-size"><svg class="icon"><use href="#s-size"/></svg>800 × 600</span>
        <span class="status-item status-pos"><svg class="icon"><use href="#s-pos"/></svg>973，-51</span>
        <button class="units">像素<i class="caret up"></i></button>
        <span class="zoom-value">100%</span>
        <div class="zoom-tools">
            <button aria-label="适合窗口"><svg class="icon"><use href="#s-fit"/></svg></button>
            <button aria-label="缩小"><svg class="icon"><use href="#s-zoomout"/></svg></button>
            <input type="range" class="zoom-slider" aria-label="缩放" min="0" max="100" value="50">
            <button aria-label="放大"><svg class="icon"><use href="#s-zoomin"/></svg></button>
        </div>
        <svg class="grip" viewBox="0 0 12 12"><path d="M9 0H12V2H9ZM5 5H7V7H5ZM9 5H12V7H9ZM0 9H2V11H0ZM5 9H7V11H5ZM9 9H12V11H9Z" fill="#a5a5a5"/></svg>
    </footer>

    <div class="watermark">水印测试</div>
</body>
</html>
```
FILE: styles.css
```css
/* General styling */
* {
    box-sizing: border-box;
}

body {
    margin: 0;
    height: 100vh;
    display: flex;
    flex-direction: column;
    position: relative;
    overflow: hidden;
    background: #fff;
    color: #000;
    font-family: "Open Sans", "Noto Sans CJK SC", sans-serif;
    font-size: 12px;
    line-height: 16px;
}

button,
select,
input {
    font: inherit;
    color: inherit;
    margin: 0;
}

button {
    display: flex;
    align-items: center;
    justify-content: center;
    padding: 0;
    border: none;
    background: none;
    white-space: nowrap;
}

h1,
h2 {
    margin: 0;
    font-size: 12px;
    font-weight: normal;
}

svg {
    display: block;
    flex: none;
}

.sprite {
    position: absolute;
    width: 0;
    height: 0;
}

.icon {
    width: 16px;
    height: 16px;
}

.icon-wide {
    width: 18px;
}

.caret {
    border: 3px solid transparent;
    border-top-color: #000;
    border-bottom: none;
}

.caret.up {
    border-top: none;
    border-bottom: 3px solid #000;
}

/* Header */
.app-header {
    position: relative;
    border-bottom: 1px solid #c4c4c4;
}

.titlebar {
    display: flex;
    align-items: center;
    height: 31px;
    padding: 0 1px 0 2px;
}

.title {
    flex: 1;
    padding-left: 6px;
}

.window-buttons {
    display: flex;
}

.window-buttons button {
    width: 46px;
    height: 31px;
}

.window-buttons svg {
    width: 10px;
    height: 10px;
    fill: none;
    stroke: #000;
}

.menu-row {
    display: flex;
    height: 30px;
}

.menu-row::before {
    content: "";
    width: 4px;
    border-bottom: 1px solid #b4b4b4;
}

.menu {
    display: flex;
    gap: 1px;
    padding: 0 3px 0 1px;
    border: 1px solid #b4b4b4;
    border-bottom: none;
}

.menu button {
    padding: 0 8px;
}

.menu-rest {
    flex: 1;
    display: flex;
    align-items: center;
    justify-content: space-between;
    padding: 0 3px 4px 89px;
    border-bottom: 1px solid #b4b4b4;
}

.tab-list svg {
    width: 8px;
    height: 8px;
}

.toggles {
    display: flex;
    align-items: center;
}

.toggle {
    width: 22px;
    height: 22px;
    margin-right: 1px;
    border: 1px solid #0078d7;
    background: #c0ddf5;
    box-shadow: inset 0 0 0 1px #e0effb;
}

.image-tab {
    position: absolute;
    left: 395px;
    top: 8px;
    width: 79px;
    height: 79px;
    flex-direction: column;
    align-items: stretch;
    justify-content: space-between;
    padding: 5px 3px 3px;
    border: 1px solid #0078d7;
    background: #c0ddf5;
    box-shadow: inset 0 0 0 1px #e0effb;
}

.image-tab svg {
    width: 10px;
    height: 10px;
}

.image-tab-thumb {
    height: 53px;
    border: 1px solid #8aa3b8;
    background: #fff;
}

/* Toolbars */
.toolbar {
    display: flex;
    align-items: center;
    height: 26px;
    padding-left: 3px;
}

.tool-btn {
    width: 23px;
    height: 22px;
}

.sep {
    width: 11px;
    height: 13px;
    background: linear-gradient(#a9c1d6, #a9c1d6) center / 1px 100% no-repeat;
}

.toggles .sep {
    width: 5px;
}

.sep-wide {
    width: 17px;
}

.sep-last {
    margin-right: 3px;
}

.options {
    height: 28px;
    padding-left: 10px;
}

.tool-label {
    width: 55px;
}

.width-label {
    width: 62px;
}

.hardness-label {
    padding-left: 4px;
    width: 42px;
}

.fill-label {
    padding-left: 2px;
    width: 43px;
}

.drop-btn {
    gap: 6px;
    padding-right: 4px;
}

.drop-btn .icon + span {
    margin-left: -2px;
    margin-right: 4px;
}

.options .drop-btn {
    margin-right: 2px;
}

.step svg {
    width: 11px;
    height: 11px;
}

.options .step {
    width: 25px;
}

.options-label {
    white-space: nowrap;
    flex: none;
}

.select {
    position: relative;
    display: flex;
}

.select select {
    width: 100%;
    height: 24px;
    padding: 0 3px;
    appearance: none;
    border: 1px solid #7a7a7a;
    border-radius: 0;
    background: #fff;
}

.select::after {
    content: "";
    position: absolute;
    right: 6px;
    top: 7px;
    width: 6px;
    height: 6px;
    border: solid #444;
    border-width: 0 1px 1px 0;
    transform: rotate(45deg);
    pointer-events: none;
}

.brush-width {
    width: 55px;
}

.fill {
    width: 121px;
}

.hardness {
    position: relative;
    display: flex;
    width: 175px;
}

.hardness input {
    width: 100%;
    height: 23px;
    appearance: none;
    border: 1px solid #999;
    background: linear-gradient(to right, #0078d7 var(--value), #fff var(--value));
}

.hardness input::-webkit-slider-thumb {
    appearance: none;
    width: 0;
}

.hardness output {
    position: absolute;
    left: 3px;
    top: 4px;
    color: #fff;
    pointer-events: none;
}

/* Workspace */
.workspace {
    flex: 1;
    position: relative;
    display: flex;
    align-items: center;
    justify-content: center;
    background: #cfcfcf;
}

.canvas {
    width: 802px;
    height: 602px;
    border: 1px solid #9a9a9a;
    background: #fff;
}

/* Floating windows */
.panel {
    position: absolute;
    display: flex;
    flex-direction: column;
    border-top: 1px solid #666;
    background: #fff;
    box-shadow: 0 2px 10px rgba(0, 0, 0, 0.5);
}

.panel-head {
    display: flex;
    justify-content: space-between;
    height: 30px;
    padding: 7px 1px 0 8px;
}

.panel-head h2 {
    overflow: hidden;
    text-overflow: ellipsis;
    white-space: nowrap;
}

.close {
    flex: none;
    width: 19px;
    height: 19px;
    padding-bottom: 2px;
    background: #c75050;
    color: #fff;
    font-size: 10px;
    font-weight: bold;
}

.panel-foot {
    display: flex;
    border-top: 1px solid #d5d5d5;
}

.tools-panel {
    left: 6px;
    top: 5px;
    width: 51px;
}

.tools {
    display: grid;
    grid-template-columns: 24px 24px;
    gap: 1px;
    padding: 1px 0 3px 1px;
}

.tools button {
    height: 24px;
}

.tools .active {
    border: 1px solid #0078d7;
    background: #c0ddf5;
    box-shadow: inset 0 0 0 1px #e0effb;
}

.tools .text-tool {
    color: #757575;
    font-family: "Liberation Serif", serif;
    font-size: 22px;
    font-weight: bold;
}

.tools .shapes {
    grid-column: span 2;
}

.shapes svg {
    width: 36px;
    height: 20px;
}

.history-panel {
    right: 6px;
    top: 5px;
    width: 165px;
}

.history-body {
    display: flex;
    height: 136px;
    padding-right: 1px;
}

.history-list {
    flex: 1;
    display: flex;
    flex-direction: column;
    justify-content: flex-end;
    overflow: hidden;
    margin: 0;
    padding: 0 1px 1px 0;
    list-style: none;
}

.history-list li {
    display: flex;
    flex: none;
    align-items: center;
    gap: 1px;
    height: 20px;
    padding: 2px 0 0 2px;
}

.history-list .selected {
    padding-left: 1px;
    border: 1px solid #0078d7;
    background: #c0ddf5;
    box-shadow: inset 0 0 0 1px #e0effb;
}

.scrollbar {
    display: flex;
    flex-direction: column;
    align-items: center;
    width: 15px;
    padding: 6px 0;
    background: #f0f0f0;
}

.scrollbar svg {
    width: 9px;
    height: 6px;
    fill: none;
    stroke: #555;
    stroke-width: 2;
}

.scroll-thumb {
    width: 15px;
    height: 32px;
    margin: auto 0 6px;
    background: #cdcdcd;
}

.history-foot {
    gap: 5px;
    height: 24px;
    padding: 0 0 2px 4px;
}

.pointer {
    position: absolute;
    left: 78px;
    top: -3px;
    width: 3px;
    height: 3px;
    border: 1px solid #000;
    background: #fff;
}

/* Colors window */
.colors-panel {
    left: 6px;
    bottom: 5px;
    width: 209px;
}

.colors-body {
    padding: 8px 9px 4px 8px;
}

.colors-top {
    display: flex;
    align-items: flex-start;
    justify-content: space-between;
}

.grey {
    width: 112px;
}

.select.grey select {
    border-color: #adadad;
    background: #e1e1e1;
}

.more {
    width: 73px;
    height: 21px;
    border: 1px solid #adadad;
    background: #e1e1e1;
}

.colors-main {
    display: flex;
    justify-content: space-between;
    padding: 4px 1px 7px 0;
}

.colors-side {
    display: flex;
    flex-direction: column;
    justify-content: space-between;
}

.swatches {
    position: relative;
    width: 44px;
    height: 44px;
}

.swatch {
    position: absolute;
    width: 28px;
    height: 28px;
    border: 1px solid #000;
}

.back {
    right: 0;
    bottom: 0;
    background: #fff;
}

.front {
    left: 0;
    top: 0;
    background: #000;
    box-shadow: inset 0 0 0 1px #fff;
}

.swap {
    position: absolute;
    right: 2px;
    top: 2px;
    width: 11px;
    height: 11px;
}

.reset {
    position: absolute;
    left: 0;
    bottom: 0;
    width: 14px;
    height: 14px;
}

.palette-tools {
    display: flex;
    gap: 6px;
}

.palette-tools .drop-btn {
    padding: 0;
}

.wheel {
    display: flex;
    align-items: center;
    justify-content: center;
    width: 141px;
    height: 141px;
    margin-left: -10px;
    border-radius: 50%;
    background:
        radial-gradient(closest-side, #fff, rgba(255, 255, 255, 0)),
        conic-gradient(from 90deg, #f00, #ff0, #0f0, #0ff, #00f, #f0f, #f00);
}

.wheel-mark {
    width: 9px;
    height: 9px;
    border: 1px solid #000;
    border-radius: 50%;
    background: #fff;
}

.palette {
    display: grid;
    grid-template-columns: repeat(16, 12px);
    grid-auto-rows: 12px;
    padding-top: 4px;
    border-top: 1px solid #d5dfe5;
}

/* Layers window */
.layers-panel {
    right: 6px;
    bottom: 5px;
    width: 165px;
    height: 191px;
}

.layer {
    display: flex;
    align-items: center;
    gap: 5px;
    height: 52px;
    padding: 0 3px 0 4px;
    border: 1px solid #0078d7;
    background: #c0ddf5;
    box-shadow: inset 0 0 0 1px #e0effb;
}

.layer-thumb {
    width: 42px;
    height: 32px;
    border: 1px solid #8aa3b8;
    background: #fff;
    color: #ccc;
    font-size: 12px;
    font-weight: 300;
    line-height: 15px;
    text-align: center;
}

.layer-name {
    flex: 1;
}

.layer input {
    display: flex;
    align-items: center;
    justify-content: center;
    width: 13px;
    height: 13px;
    appearance: none;
    border: 1px solid #333;
    background: #fff;
}

.layer input:checked::after {
    content: "";
    width: 4px;
    height: 8px;
    margin-bottom: 2px;
    border: solid #222;
    border-width: 0 1px 1px 0;
    transform: rotate(45deg);
}

.layers-space {
    flex: 1;
}

.layers-foot {
    height: 24px;
    padding: 0 3px 2px 1px;
    justify-content: space-between;
}

.layers-foot button {
    width: 23px;
}

/* Status bar */
.statusbar {
    display: flex;
    align-items: center;
    height: 26px;
    padding: 0 3px 0 2px;
}

.hint {
    flex: 1;
}

.status-item {
    display: flex;
    align-items: center;
}

.status-size {
    width: 112px;
}

.status-pos {
    width: 110px;
}

.units {
    gap: 11px;
    width: 41px;
}

.zoom-value {
    padding-left: 10px;
    width: 57px;
}

.zoom-tools {
    display: flex;
    align-items: center;
    gap: 8px;
}

.zoom-tools button:first-child {
    margin-right: 5px;
}

.zoom-slider {
    width: 90px;
    height: 16px;
    appearance: none;
    background: linear-gradient(#777, #777) center / 100% 1px no-repeat;
}

.zoom-slider::-webkit-slider-thumb {
    appearance: none;
    width: 10px;
    height: 15px;
    border: 1px solid #777;
    border-radius: 1px 1px 5px 5px;
    background: #e0e0e0;
}

.grip {
    align-self: flex-end;
    width: 12px;
    height: 12px;
    margin: 0 0 2px 4px;
}

.watermark {
    position: absolute;
    right: 0;
    bottom: 16px;
    color: #222;
    font-size: 20px;
    font-weight: 300;
    line-height: 24px;
    pointer-events: none;
}
```
